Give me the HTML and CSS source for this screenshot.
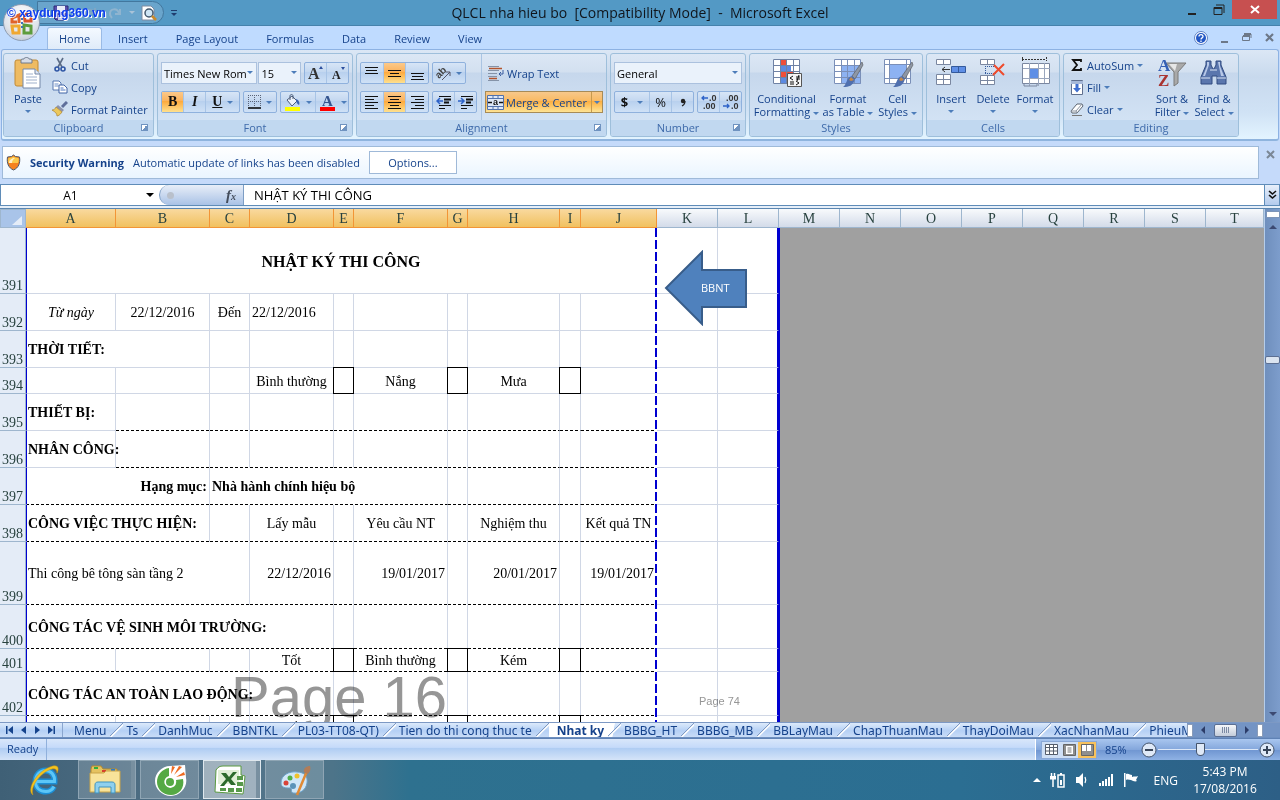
FILE: index.html
```html
<!DOCTYPE html>
<html lang="en">
<head>
  <meta charset="UTF-8">
  <meta name="viewport" content="width=device-width, initial-scale=1.0">
  <title>QLCL nha hieu bo [Compatibility Mode] - Microsoft Excel</title>
  <link rel="stylesheet" href="styles.css">
</head>
<body>
  <!-- Title bar -->
  <header class="titlebar">
    <div class="qat">
      <svg class="qat-save" width="16" height="16" viewBox="0 0 16 16"><path d="M1 1h14v14H3l-2-2z" fill="#5a4fae" stroke="#2d2877"/><path d="M4 1h8v6H4z" fill="#e8ecfa"/><path d="M5 10h7v5H5z" fill="#c9cde6"/></svg>
      <svg width="42" height="16" viewBox="0 0 42 16"><path d="M4 9a5 5 0 0 1 9-2M14 3v5H9" fill="none" stroke="#7fa6c4" stroke-width="2"/><path d="M39 4v5h-5M38 8c-2-5-9-5-9 1 0 2 1 3 2 4" fill="none" stroke="#8fb4cf" stroke-width="2"/></svg>
      <span class="caret pale"></span>
      <svg class="preview" width="16" height="16" viewBox="0 0 16 16"><path d="M1 1h9l3 3v11H1z" fill="#fff" stroke="#7c8aa0"/><circle cx="8" cy="8" r="4" fill="#cfe6f5" stroke="#44596e" stroke-width="1.5"/><path d="M11 11l4 4" stroke="#c98a2b" stroke-width="2.5"/></svg>
    </div>
    <span class="qat-more"><i></i><span class="caret navy"></span></span>
    <h1>QLCL nha hieu bo&nbsp; [Compatibility Mode]&nbsp; -&nbsp; Microsoft Excel</h1>
    <div class="win-buttons">
      <button type="button" aria-label="Minimize"><svg width="10" height="12" viewBox="0 0 10 12"><path d="M1 10h8" stroke="#222" stroke-width="2"/></svg></button>
      <button type="button" aria-label="Restore"><svg width="12" height="12" viewBox="0 0 12 12"><path d="M1 3.500h8v7H1zM3 1h8v8" fill="none" stroke="#222"/><path d="M1 4h8" stroke="#222" stroke-width="2"/></svg></button>
      <button type="button" class="close" aria-label="Close"><svg width="10" height="9" viewBox="0 0 10 9"><path d="M1 1l8 7M9 1L1 8" stroke="#fff" stroke-width="2"/></svg></button>
    </div>
    <button type="button" class="office" aria-label="Office Button">
      <svg width="24" height="26" viewBox="0 0 24 26" fill="none" stroke-width="3"><path d="M2 8l7-3v8M2 8v4h5" stroke="#e0622a"/><path d="M14 4h7v7h-6z" stroke="#d9532c"/><path d="M2 16h7v7H3z" stroke="#f0a830"/><path d="M14 15v8h7v-7z" stroke="#5d9c3c"/><path d="M12 8v12" stroke="#3b74bb" stroke-width="2" stroke-dasharray="2 2"/></svg>
    </button>
    <span class="site-mark">© <b>xaydung360.vn</b></span>
  </header>

  <!-- Ribbon tabs -->
  <nav class="ribbon-tabs">
    <a href="#" class="active">Home</a>
    <a href="#">Insert</a>
    <a href="#">Page Layout</a>
    <a href="#">Formulas</a>
    <a href="#">Data</a>
    <a href="#">Review</a>
    <a href="#">View</a>
    <div class="doc-buttons">
      <button type="button" aria-label="Help"><svg width="14" height="14" viewBox="0 0 14 14"><circle cx="7" cy="7" r="6.500" fill="#fff" stroke="#5f83c4"/><circle cx="7" cy="7" r="5" fill="#2257c5"/><path d="M5 5.500c0-2.500 4-2.500 4 0C9 7 7 6.800 7 8.500M7 9.500V11" fill="none" stroke="#fff" stroke-width="1.300"/></svg></button>
      <button type="button" aria-label="Minimize workbook"><svg width="8" height="10" viewBox="0 0 8 10"><path d="M0 9h7" stroke="#6d7888" stroke-width="2"/></svg></button>
      <button type="button" aria-label="Restore workbook"><svg width="10" height="9" viewBox="0 0 10 9"><path d="M.5 3.500h7v4h-7zM2 1h7v4" fill="none" stroke="#6d7888"/><path d="M1 3h7M2 1h7" stroke="#6d7888" stroke-width="2"/></svg></button>
      <button type="button" aria-label="Close workbook"><svg width="10" height="9" viewBox="0 0 10 9"><path d="M1 1l7 7M8 1L1 8" stroke="#6d7888" stroke-width="2.200"/></svg></button>
    </div>
  </nav>

  <!-- Ribbon -->
  <section class="ribbon">
    <div class="group clipboard">
      <div class="group-body">
        <button type="button" class="big">
          <svg width="30" height="32" viewBox="0 0 30 32"><rect x="2" y="3" width="23" height="26" rx="2" fill="#eebb62" stroke="#c08a36"/><path d="M8 3c0-1 2-1 3-1 0-2 5-2 5 0 1 0 3 0 3 1v3H8z" fill="#d6dce6" stroke="#6f7b8c"/><path d="M10 12h12l5 5v14H10z" fill="#fff" stroke="#7588a8"/><path d="M22 12v5h5" fill="#dfe7f3" stroke="#7588a8"/><path d="M13 17h7M13 20h11M13 23h11M13 26h11" stroke="#9fb0cb"/></svg>
          <span>Paste</span><span class="caret"></span>
        </button>
        <div class="stack">
          <button type="button" class="small"><svg width="16" height="16" viewBox="0 0 16 16"><path d="M5 1l5 9M11 1L6 10" stroke="#5c6c86" stroke-width="1.600"/><circle cx="5" cy="12" r="2" fill="none" stroke="#2f56a5" stroke-width="1.600"/><circle cx="11" cy="12" r="2" fill="none" stroke="#2f56a5" stroke-width="1.600"/></svg>Cut</button>
          <button type="button" class="small"><svg width="16" height="16" viewBox="0 0 16 16"><path d="M1 2h6l2 2v7H1z" fill="#fff" stroke="#5777b0"/><path d="M2.500 5h4M2.500 7h4" stroke="#6e8fc8"/><path d="M7 6h5l3 3v5H7z" fill="#fff" stroke="#3f62a5"/><path d="M8.500 9h3M8.500 11h5" stroke="#4d76c0"/></svg>Copy</button>
          <button type="button" class="small"><svg width="16" height="16" viewBox="0 0 16 16"><path d="M15 1l-5 5" stroke="#5f6f9b" stroke-width="3"/><path d="M6 4l6 5-2 2-6-5z" fill="#8c93ad"/><path d="M4 6l6 5c-2 3-4 4-5 4C5 12 3 11 0 9c2 0 3-1 4-3z" fill="#ecc85c" stroke="#a98232" stroke-width=".7"/></svg>Format Painter</button>
        </div>
      </div>
      <div class="group-label">Clipboard<i class="launcher"></i></div>
    </div>

    <div class="group font">
      <div class="group-body rows">
        <div class="row">
          <label class="combo font-name"><select aria-label="Font"><option>Times New Rom</option></select></label>
          <label class="combo font-size"><select aria-label="Font size"><option>15</option></select></label>
          <div class="btns grow-shrink">
            <button type="button" aria-label="Grow font"><svg width="18" height="18" viewBox="0 0 18 18"><text x="1" y="15" font-family="Liberation Serif" font-weight="bold" font-size="16" fill="#333">A</text><path d="M12 5l2-3 2 3z" fill="#2c4f9e"/></svg></button>
            <button type="button" aria-label="Shrink font"><svg width="18" height="18" viewBox="0 0 18 18"><text x="3" y="15" font-family="Liberation Serif" font-weight="bold" font-size="12" fill="#222">A</text><path d="M12 3l2 3 2-3z" fill="#2c4f9e"/></svg></button>
          </div>
        </div>
        <div class="row">
          <div class="btns biu">
            <button type="button" class="on serif"><b>B</b></button>
            <button type="button" class="serif"><b><i>I</i></b></button>
            <button type="button" class="serif wide"><b><u>U</u></b><span class="caret"></span></button>
          </div>
          <div class="btns single">
            <button type="button" class="wide" aria-label="Borders"><svg width="14" height="14" viewBox="0 0 14 14"><path d="M.5 0v12M6.500 0v12M12.500 0v12M0 .5h13M0 6.500h13" stroke="#5a6478" stroke-dasharray="1 1"/><path d="M0 13h13" stroke="#000" stroke-width="1.500"/></svg><span class="caret"></span></button>
          </div>
          <div class="btns colors">
            <button type="button" class="wide" aria-label="Fill color"><svg width="17" height="17" viewBox="0 0 17 17"><path d="M3 6l5-4 5 5-5 5z" fill="#eef3fa" stroke="#4c5d7a"/><path d="M6 6V2c0-2 3-2 3 0v3" fill="none" stroke="#4c5d7a"/><path d="M12 5c3 1 4 4 3 6-2-1-3-3-3-6z" fill="#3a62b0"/><path d="M1 13h15v4H1z" fill="#ff0"/></svg><span class="caret"></span></button>
            <button type="button" class="wide" aria-label="Font color"><svg width="17" height="17" viewBox="0 0 17 17"><text x="3" y="12" font-family="Liberation Serif" font-weight="bold" font-size="15" fill="#35558f">A</text><path d="M1 13h15v4H1z" fill="#f00"/></svg><span class="caret"></span></button>
          </div>
        </div>
      </div>
      <div class="group-label">Font<i class="launcher"></i></div>
    </div>

    <div class="group alignment">
      <div class="group-body">
        <div class="rows left-part">
          <div class="row">
            <div class="btns three">
              <button type="button" aria-label="Top align"><svg width="15" height="14" viewBox="0 0 15 14"><path d="M1 1.500h13M2 4.500h11M1 7.500h13" stroke="#111"/></svg></button>
              <button type="button" class="on" aria-label="Middle align"><svg width="15" height="14" viewBox="0 0 15 14"><path d="M1 4.500h13M3 7.500h9M1 10.500h13" stroke="#111"/></svg></button>
              <button type="button" aria-label="Bottom align"><svg width="15" height="14" viewBox="0 0 15 14"><path d="M1 7.500h13M2 10.500h11M1 13.500h13" stroke="#111"/></svg></button>
            </div>
            <div class="btns single">
              <button type="button" class="wide" aria-label="Orientation"><svg width="16" height="16" viewBox="0 0 16 16"><text x="0" y="11" transform="rotate(-45 5 9)" font-family="Liberation Sans" font-weight="bold" font-size="10" fill="#444">ab</text><path d="M6 15l8-8M14 11V7h-4" fill="none" stroke="#556"/></svg><span class="caret"></span></button>
            </div>
          </div>
          <div class="row">
            <div class="btns three">
              <button type="button" aria-label="Align left"><svg width="15" height="14" viewBox="0 0 15 14"><path d="M1 1.500h13M1 4.500h9M1 7.500h13M1 10.500h9M1 13.500h13" stroke="#111"/></svg></button>
              <button type="button" class="on" aria-label="Center"><svg width="15" height="14" viewBox="0 0 15 14"><path d="M1 1.500h13M3 4.500h9M1 7.500h13M3 10.500h9M1 13.500h13" stroke="#111"/></svg></button>
              <button type="button" aria-label="Align right"><svg width="15" height="14" viewBox="0 0 15 14"><path d="M1 1.500h13M5 4.500h9M1 7.500h13M5 10.500h9M1 13.500h13" stroke="#111"/></svg></button>
            </div>
            <div class="btns two">
              <button type="button" aria-label="Decrease indent"><svg width="16" height="14" viewBox="0 0 16 14"><path d="M3 1.500h12M3 10.500h12M3 13.500h6" stroke="#111"/><path d="M8 4.500h7M8 7.500h5" stroke="#111" stroke-width="2"/><path d="M7 6H2M4 3L1 6l3 3" fill="none" stroke="#2d62c8" stroke-width="1.500"/></svg></button>
              <button type="button" aria-label="Increase indent"><svg width="16" height="14" viewBox="0 0 16 14"><path d="M3 1.500h12M3 10.500h12M3 13.500h6" stroke="#111"/><path d="M8 4.500h7M8 7.500h5" stroke="#111" stroke-width="2"/><path d="M0 6h5M3 3l3 3-3 3" fill="none" stroke="#2d62c8" stroke-width="1.500"/></svg></button>
            </div>
          </div>
        </div>
        <div class="rows right-part">
          <button type="button" class="small wrap"><svg width="16" height="15" viewBox="0 0 16 15"><path d="M0 .5h11M0 4.500h11M0 7.500h9M0 10.500h9M0 14.500h11" stroke="#8593a8"/><path d="M1 2.500h13" stroke="#b3542d" stroke-width="1.500"/><path d="M1 12.500h8" stroke="#b3542d" stroke-width="1.500"/><path d="M15 4v4h-4M13 6l-2 2 2 2" fill="none" stroke="#3a5da0"/></svg>Wrap Text</button>
          <button type="button" class="small merge"><svg width="17" height="15" viewBox="0 0 17 15"><path d="M.5.5h16v14H.5z" fill="#dfe8f6" stroke="#5272ac"/><path d="M6 0v3M11 0v3M6 12v3M11 12v3M0 3.500h16M0 11.500h16" stroke="#5272ac"/><text x="6" y="10" font-family="Liberation Sans" font-weight="bold" font-size="9" fill="#111">a</text><path d="M1 7.500h4M12 7.500h4" stroke="#111" stroke-width="1.500"/></svg>Merge &amp; Center<span class="split"><span class="caret"></span></span></button>
        </div>
      </div>
      <div class="group-label">Alignment<i class="launcher"></i></div>
    </div>

    <div class="group number">
      <div class="group-body rows">
        <div class="row">
          <label class="combo number-format"><select aria-label="Number format"><option>General</option></select></label>
        </div>
        <div class="row">
          <div class="btns biu">
            <button type="button" class="wide money"><b>$</b><span class="caret"></span></button>
            <button type="button" class="percent">%</button>
            <button type="button" aria-label="Comma style"><svg width="6" height="9" viewBox="0 0 6 9"><circle cx="3" cy="3" r="2.200" fill="#222"/><path d="M5 3c0 3-1 4-3 5" fill="none" stroke="#222" stroke-width="1.300"/></svg></button>
          </div>
          <div class="btns two">
            <button type="button" aria-label="Increase decimal"><svg width="18" height="16" viewBox="0 0 18 16"><text x="9" y="7" font-family="Liberation Sans" font-weight="bold" font-size="9" fill="#333">.0</text><text x="3" y="15" font-family="Liberation Sans" font-weight="bold" font-size="9" fill="#333">.00</text><path d="M8 4H2M4 2L2 4l2 2" fill="none" stroke="#2d62c8" stroke-width="1.300"/></svg></button>
            <button type="button" aria-label="Decrease decimal"><svg width="18" height="16" viewBox="0 0 18 16"><text x="4" y="7" font-family="Liberation Sans" font-weight="bold" font-size="9" fill="#333">.00</text><text x="9" y="15" font-family="Liberation Sans" font-weight="bold" font-size="9" fill="#333">.0</text><path d="M1 12h6M5 10l2 2-2 2" fill="none" stroke="#2d62c8" stroke-width="1.300"/></svg></button>
          </div>
        </div>
      </div>
      <div class="group-label">Number<i class="launcher"></i></div>
    </div>

    <div class="group styles">
      <div class="group-body">
        <button type="button" class="big w66">
          <svg width="32" height="32" viewBox="0 0 32 32"><path d="M2 2h27v25H2z" fill="#fff"/><path d="M9 2h7v6H9zM9 14h13v7H9z" fill="#ee4f3a"/><path d="M9 8h11v6H9zM9 21h6v6H9z" fill="#5b8ae2"/><path d="M2.500 2.500h26v24h-26zM2 8.500h27M2 14.500h27M2 20.500h27M9.500 2v25M15.500 2v25M22.500 2v25" fill="none" stroke="#6f82a5"/><path d="M16.500 16.500h14v13h-14z" fill="#f5f5f5" stroke="#555"/><path d="M22 19l-3 2 3 2M19 25h4M19 27h4M25 20h4M25 22h4M28 18l-2 6M25 24l3 2-3 2" fill="none" stroke="#111"/></svg>
          <span>Conditional</span><span>Formatting <i class="caret"></i></span>
        </button>
        <button type="button" class="big w52">
          <svg width="32" height="32" viewBox="0 0 32 32"><path d="M2 2h27v25H2z" fill="#fff"/><path d="M9 8h20v19H9z" fill="#8db2f2"/><path d="M2.500 2.500h26v24h-26zM2 8.500h27M2 14.500h27M2 20.500h27M9.500 2v25M15.500 2v25M22.500 2v25" fill="none" stroke="#7a8fb8"/><path d="M30 5L20 19l3 3 8-14z" fill="#8e97a5" stroke="#555" stroke-width=".6"/><path d="M20 19l3 3c-2 7-6 8-12 8 4-2 3-10 9-11z" fill="#4f6fae"/><path d="M19 20l3 3-3 1-2-1z" fill="#c38a4a"/></svg>
          <span>Format</span><span>as Table <i class="caret"></i></span>
        </button>
        <button type="button" class="big w46">
          <svg width="32" height="32" viewBox="0 0 32 32"><path d="M2 2h27v25H2z" fill="#fff"/><path d="M7 7h17v15H7z" fill="#8db2f2"/><path d="M2.500 2.500h26v24h-26zM2 7.500h27M2 21.500h27M7.500 2v25M24.500 2v25" fill="none" stroke="#7a8fb8"/><path d="M30 5L20 19l3 3 8-14z" fill="#8e97a5" stroke="#555" stroke-width=".6"/><path d="M20 19l3 3c-2 7-6 8-12 8 4-2 3-10 9-11z" fill="#4f6fae"/><path d="M19 20l3 3-3 1-2-1z" fill="#c38a4a"/></svg>
          <span>Cell</span><span>Styles <i class="caret"></i></span>
        </button>
      </div>
      <div class="group-label">Styles</div>
    </div>

    <div class="group cells">
      <div class="group-body">
        <button type="button" class="big w42">
          <svg width="32" height="32" viewBox="0 0 32 32"><path d="M1.500 2.500h14v5h-14zM8.500 2v5M1.500 17.500h14v10h-14zM8.500 17v10M1 22.500h14" fill="#fff" stroke="#7a87a0"/><path d="M16.500 9.500h14v6h-14z" fill="#5f8fe6" stroke="#345a9c"/><path d="M23.500 9v6" stroke="#345a9c"/><path d="M15 12.500H7M10 10l-3 2.500 3 2.500" fill="none" stroke="#333"/></svg>
          <span>Insert</span><span class="caret"></span>
        </button>
        <button type="button" class="big w42">
          <svg width="32" height="32" viewBox="0 0 32 32"><path d="M3.500 2.500h14v5h-14zM10.500 2v5M3.500 18.500h14v9h-14zM10.500 18v10M3 23.500h14" fill="#fff" stroke="#7a87a0"/><path d="M8 9.500h11M8 16.500h11M8.500 9v8" stroke="#345a9c" stroke-dasharray="1 1"/><path d="M17 8l10 10M27 7L16 18" stroke="#ee4b2c" stroke-width="2"/></svg>
          <span>Delete</span><span class="caret"></span>
        </button>
        <button type="button" class="big w42">
          <svg width="32" height="32" viewBox="0 0 32 32"><path d="M3 2.500h24M3.500 0v4M27.500 0v4" stroke="#333" stroke-dasharray="2 1"/><path d="M3.500 6.500h27v20h-27z" fill="#fff" stroke="#7a87a0"/><path d="M11 12h8v9h-8z" fill="#5f8fe6"/><path d="M4 11.500h27M4 21.500h27M10.500 6v23M19.500 6v23M25.500 6v20" stroke="#9aa6bd"/><path d="M5 27v2h13v-2" fill="none" stroke="#7a87a0"/></svg>
          <span>Format</span><span class="caret"></span>
        </button>
      </div>
      <div class="group-label">Cells</div>
    </div>

    <div class="group editing">
      <div class="group-body">
        <div class="stack">
          <button type="button" class="small"><svg width="14" height="14" viewBox="0 0 14 14"><path d="M11 4V2H3l4 5-4 5h8v-2" fill="none" stroke="#111" stroke-width="1.800"/></svg>AutoSum <span class="caret"></span></button>
          <button type="button" class="small"><svg width="14" height="15" viewBox="0 0 14 15"><path d="M1.500.5h11v14h-11z" fill="#fff" stroke="#5f6f8e"/><path d="M1 1h12v3H1z" fill="#a6b8d8"/><path d="M5.500 4h3v4h2.500l-4 4.500L3 8h2.500z" fill="#3f6fd0"/></svg>Fill <span class="caret"></span></button>
          <button type="button" class="small"><svg width="14" height="14" viewBox="0 0 14 14"><path d="M7 2h5l1 2-6 7H2l-1-2z" fill="#fff" stroke="#5d6672"/><path d="M1 9h5l6-7M6 9l1 2" fill="none" stroke="#8a93a0"/><path d="M2 13.500h10" stroke="#777"/></svg>Clear <span class="caret"></span></button>
        </div>
        <button type="button" class="big w42">
          <svg width="32" height="32" viewBox="0 0 32 32"><path d="M10 6h20l-8 9v11l-4 3V15z" fill="#a9a9a9" stroke="#7a7a7a"/><path d="M13 7h8l-2 7z" fill="#e6e6e6"/><text x="2" y="14" font-family="Liberation Serif" font-weight="bold" font-size="17" fill="#3560b5">A</text><text x="2" y="29" font-family="Liberation Serif" font-weight="bold" font-size="17" fill="#a93330">Z</text></svg>
          <span>Sort &amp;</span><span>Filter <i class="caret"></i></span>
        </button>
        <button type="button" class="big w42">
          <svg width="32" height="32" viewBox="0 0 32 32"><path d="M8 4h5v4l2 4h1l2-4V4h5v4l5 12v7h-9v-8h-5v8H3v-7L8 8z" fill="#5a76ad" stroke="#304a80"/><path d="M9 5h2v3l-4 11H5L9 9zM20 5h2v4l4 10h-3z" fill="#b8c9e8"/><path d="M3 21h9M19 21h9M12 13h7" stroke="#dbe5f5"/></svg>
          <span>Find &amp;</span><span>Select <i class="caret"></i></span>
        </button>
      </div>
      <div class="group-label">Editing</div>
    </div>
  </section>

  <!-- Security message bar -->
  <section class="message-bar">
    <div class="message">
      <svg width="15" height="17" viewBox="0 0 15 17"><path d="M7.500 1l2 1.500 4 .5c1 6-1 11-6 13-5-2-7-7-6-13l4-.5z" fill="#f58220" stroke="#4f5a6b"/><path d="M7.500 2.500l2 1 3 .5c.5 2 0 4-.5 5H2.500C2 7 2 5 2.500 4l3-.5z" fill="#fbc94a"/><path d="M3 9c0-3 3-5 6-5-2 1-3 3-3 5z" fill="#fff" opacity=".7"/></svg>
      <strong>Security Warning</strong>
      <span>Automatic update of links has been disabled</span>
      <button type="button">Options...</button>
    </div>
    <button type="button" class="dismiss" aria-label="Close message"><svg width="9" height="9" viewBox="0 0 9 9"><path d="M1 1l7 7M8 1L1 8" stroke="#7b8796" stroke-width="2"/></svg></button>
  </section>

  <!-- Formula bar -->
  <section class="formula-bar">
    <label class="name-box"><input type="text" value="A1" aria-label="Name box"><span class="caret black"></span></label>
    <div class="fx"><i></i><em>f<small>x</small></em></div>
    <input type="text" class="formula" value="NHẬT KÝ THI CÔNG" aria-label="Formula">
    <button type="button" aria-label="Expand formula bar"><svg width="9" height="10" viewBox="0 0 9 10"><path d="M1 1l3.500 3L8 1M1 5l3.500 3L8 5" fill="none" stroke="#111" stroke-width="1.600"/></svg></button>
  </section>

  <!-- Worksheet -->
  <main class="workspace">
    <div class="sheet">
      <table>
        <colgroup>
          <col class="c-head"><col class="c-a"><col class="c-b"><col class="c-c"><col class="c-d"><col class="c-e"><col class="c-f"><col class="c-e"><col class="c-h"><col class="c-i"><col class="c-j">
          <col class="c-k"><col class="c-k"><col class="c-k"><col class="c-k"><col class="c-k"><col class="c-k"><col class="c-k"><col class="c-k"><col class="c-k"><col>
        </colgroup>
        <thead>
          <tr>
            <th class="corner"><svg width="10" height="9" viewBox="0 0 10 9"><path d="M10 0v9H0z" fill="#e4ecf7"/></svg></th>
            <th class="sel">A</th><th class="sel">B</th><th class="sel">C</th><th class="sel">D</th><th class="sel">E</th><th class="sel">F</th><th class="sel">G</th><th class="sel">H</th><th class="sel">I</th><th class="sel">J</th>
            <th>K</th><th>L</th><th>M</th><th>N</th><th>O</th><th>P</th><th>Q</th><th>R</th><th>S</th><th>T</th>
          </tr>
        </thead>
        <tbody>
          <tr class="h66">
            <th>391</th>
            <td colspan="10" class="first title">NHẬT KÝ THI CÔNG</td>
            <td></td><td class="last"></td>
            <td class="outside" colspan="8" rowspan="13"></td>
          </tr>
          <tr class="h37">
            <th>392</th>
            <td class="first center"><em>Từ ngày</em></td><td class="center">22/12/2016</td><td class="center">Đến</td><td>22/12/2016</td><td></td><td></td><td></td><td></td><td></td><td></td>
            <td></td><td class="last"></td>
          </tr>
          <tr class="h37">
            <th>393</th>
            <td colspan="2" class="first bold">THỜI TIẾT:</td><td></td><td></td><td></td><td></td><td></td><td></td><td></td><td></td>
            <td></td><td class="last"></td>
          </tr>
          <tr class="h26">
            <th>394</th>
            <td class="first"></td><td></td><td></td><td class="center">Bình thường</td><td class="box"></td><td class="center">Nắng</td><td class="box"></td><td class="center">Mưa</td><td class="box"></td><td></td>
            <td></td><td class="last"></td>
          </tr>
          <tr class="h37">
            <th>395</th>
            <td class="first bold">THIẾT BỊ:</td><td class="dot"></td><td class="dot"></td><td class="dot"></td><td class="dot"></td><td class="dot"></td><td class="dot"></td><td class="dot"></td><td class="dot"></td><td class="dot"></td>
            <td></td><td class="last"></td>
          </tr>
          <tr class="h37">
            <th>396</th>
            <td class="first bold">NHÂN CÔNG:</td><td class="dot"></td><td class="dot"></td><td class="dot"></td><td class="dot"></td><td class="dot"></td><td class="dot"></td><td class="dot"></td><td class="dot"></td><td class="dot"></td>
            <td></td><td class="last"></td>
          </tr>
          <tr class="h37">
            <th>397</th>
            <td colspan="2" class="first bold right dot">Hạng mục:</td><td colspan="4" class="bold dot">Nhà hành chính hiệu bộ</td><td class="dot"></td><td class="dot"></td><td class="dot"></td><td class="dot"></td>
            <td></td><td class="last"></td>
          </tr>
          <tr class="h37">
            <th>398</th>
            <td colspan="2" class="first bold dot">CÔNG VIỆC THỰC HIỆN:</td><td class="dot"></td><td class="center dot">Lấy mẫu</td><td class="dot"></td><td class="center dot">Yêu cầu NT</td><td class="dot"></td><td class="center dot">Nghiệm thu</td><td class="dot"></td><td class="center dot">Kết quả TN</td>
            <td></td><td class="last"></td>
          </tr>
          <tr class="h63">
            <th>399</th>
            <td colspan="3" class="first dot">Thi công bê tông sàn tầng 2</td><td class="right dot">22/12/2016</td><td class="dot"></td><td class="right dot">19/01/2017</td><td class="dot"></td><td class="right dot">20/01/2017</td><td class="dot"></td><td class="right dot">19/01/2017</td>
            <td></td><td class="last"></td>
          </tr>
          <tr class="h44">
            <th>400</th>
            <td colspan="4" class="first bold dot">CÔNG TÁC VỆ SINH MÔI TRƯỜNG:</td><td class="dot"></td><td class="dot"></td><td class="dot"></td><td class="dot"></td><td class="dot"></td><td class="dot"></td>
            <td></td><td class="last"></td>
          </tr>
          <tr class="h23">
            <th>401</th>
            <td class="first dot"></td><td class="dot"></td><td class="dot"></td><td class="center dot">Tốt</td><td class="box"></td><td class="center dot">Bình thường</td><td class="box"></td><td class="center dot">Kém</td><td class="box"></td><td class="dot"></td>
            <td></td><td class="last"></td>
          </tr>
          <tr class="h44">
            <th>402</th>
            <td colspan="3" class="first bold dot">CÔNG TÁC AN TOÀN LAO ĐỘNG:</td><td class="dot"></td><td class="dot"></td><td class="dot"></td><td class="dot"></td><td class="dot"></td><td class="dot"></td><td class="dot"></td>
            <td></td><td class="last"></td>
          </tr>
          <tr class="h23">
            <th></th>
            <td class="first"></td><td></td><td></td><td class="center">Tốt</td><td class="box"></td><td></td><td class="box"></td><td></td><td class="box"></td><td></td>
            <td></td><td class="last"></td>
          </tr>
        </tbody>
      </table>
      <div class="page-mark">Page 16</div>
      <div class="page-mark next">Page 74</div>
      <div class="page-break"></div>
      <a href="#" class="arrow-shape">
        <svg width="84" height="76" viewBox="0 0 84 76"><path d="M2 38L38 2v18h44v37H38v17z" fill="#4f81bd" stroke="#385d8a" stroke-width="2"/></svg>
        <span>BBNT</span>
      </a>
    </div>
    <div class="vscroll">
      <i class="splitter"></i>
      <span class="tri up"></span>
      <i class="thumb"></i>
      <span class="tri down"></span>
    </div>
  </main>

  <!-- Sheet tabs -->
  <nav class="sheet-tabs">
    <div class="tab-nav">
      <svg width="9" height="8" viewBox="0 0 9 8"><path d="M1 0h1.500v8H1zM8 0v8L3 4z" fill="#15428b"/></svg>
      <svg width="6" height="8" viewBox="0 0 6 8"><path d="M5 0v8L0 4z" fill="#15428b"/></svg>
      <svg width="6" height="8" viewBox="0 0 6 8"><path d="M1 0v8l5-4z" fill="#15428b"/></svg>
      <svg width="9" height="8" viewBox="0 0 9 8"><path d="M6.500 0H8v8H6.500zM1 0v8l5-4z" fill="#15428b"/></svg>
    </div>
    <div class="tabs">
      <a href="#">Menu</a><a href="#">Ts</a><a href="#">DanhMuc</a><a href="#">BBNTKL</a><a href="#">PL03-TT08-QT)</a><a href="#">Tien do thi cong thuc te</a><a href="#" class="active">Nhat ky</a><a href="#">BBBG_HT</a><a href="#">BBBG_MB</a><a href="#">BBLayMau</a><a href="#">ChapThuanMau</a><a href="#">ThayDoiMau</a><a href="#">XacNhanMau</a><a href="#">PhieuMau</a>
    </div>
    <div class="hscroll">
      <i class="grip"></i><span class="tri left"></span><i class="thumb"></i><span class="tri rightward"></span><i class="grip"></i>
    </div>
  </nav>

  <!-- Status bar -->
  <footer class="status">
    <span class="ready">Ready</span>
    <div class="status-right">
      <div class="views">
        <button type="button" aria-label="Normal view"><svg width="13" height="11" viewBox="0 0 13 11"><path d="M.5.5h12v10H.5zM0 3.500h13M0 7h13M4.500 0v11M8.500 0v11" fill="#fff" stroke="#555d6b"/></svg></button>
        <button type="button" aria-label="Page layout view"><svg width="13" height="12" viewBox="0 0 13 12"><path d="M.5.5h12v11H.5z" fill="#8e8e8e" stroke="#666"/><path d="M3 2h7v8H3z" fill="#fff"/><path d="M4.500 4h4M4.500 6h4M4.500 8h4" stroke="#777"/></svg></button>
        <button type="button" class="on" aria-label="Page break preview"><svg width="13" height="12" viewBox="0 0 13 12"><path d="M.5.5h12v11H.5z" fill="#8e8e8e" stroke="#666"/><path d="M1 1h4v6H1zM6 1h4v6H6z" fill="#fff"/></svg></button>
      </div>
      <span class="zoom-value">85%</span>
      <button type="button" class="round" aria-label="Zoom out"><svg width="16" height="16" viewBox="0 0 16 16"><circle cx="8" cy="8" r="7" fill="#dfe9f7" stroke="#44546c"/><path d="M4 8h8" stroke="#39465a" stroke-width="2"/></svg></button>
      <input type="range" min="0" max="100" value="42" aria-label="Zoom">
      <button type="button" class="round" aria-label="Zoom in"><svg width="16" height="16" viewBox="0 0 16 16"><circle cx="8" cy="8" r="7" fill="#dfe9f7" stroke="#44546c"/><path d="M4 8h8M8 4v8" stroke="#39465a" stroke-width="2"/></svg></button>
    </div>
  </footer>

  <!-- Windows taskbar -->
  <footer class="taskbar">
    <div class="apps">
      <button type="button" class="app plain" aria-label="Internet Explorer"><svg width="34" height="34" viewBox="0 0 34 34"><path d="M8 18.500h18.500C27 12 23 7.500 17.500 7.500S7.500 12 7.500 18.500 12 28.500 18 28.500c4 0 6.500-2 8-5" fill="none" stroke="#1c8fd6" stroke-width="6"/><path d="M8 18.500h18.500C27 12 23 7.500 17.500 7.500S7.500 12 7.500 18.500 12 28.500 18 28.500c4 0 6.500-2 8-5" fill="none" stroke="#5cc6f7" stroke-width="3"/><path d="M5 32C-2 27 8 9 22 4c7-3 10 0 7 6 0-5-3-5-8-3C10 12 2 25 5 32z" fill="#f6c31c" stroke="#c99410" stroke-width=".5"/></svg></button>
      <button type="button" class="app stacked" aria-label="File Explorer"><svg width="34" height="32" viewBox="0 0 34 32"><path d="M3 5l1-3h9l2 3h14v21H3z" fill="#e5c260" stroke="#b38a2e"/><path d="M6 3h4v2H6z" fill="#2fae3c"/><path d="M14 6h4v2h-4z" fill="#d8422e"/><path d="M23 5h4v2h-4z" fill="#2f7ac8"/><path d="M2 9h14l2-2h14v21H2z" fill="#f8e39a" stroke="#c9a448"/><path d="M7 29v-8c0-2 1-3 3-3h14c2 0 3 1 3 3v8h-4v-6H11v6z" fill="#8fd0ee" stroke="#3f93bf"/></svg></button>
      <button type="button" class="app" aria-label="Coc Coc"><svg width="34" height="34" viewBox="0 0 34 34"><path d="M17 3l15-1 1 13c2 9-6 18-15 18C9 33 2 26 2 18 2 10 9 3 17 3z" fill="#fff"/><path d="M16 5v8a6 6 0 1 0 7 4l7-1c2 9-4 16-12 16C10 32 4 26 4 19S9 6 16 5z" fill="#55a944"/><path d="M18 11l1-8 3 1zM21 12l5-9 3 1zM23 14l8-5 1 3z" fill="#ef6a20"/><circle cx="17" cy="19" r="4" fill="#55a944"/></svg></button>
      <button type="button" class="app stacked active" aria-label="Excel"><svg width="34" height="32" viewBox="0 0 34 32"><path d="M3 6c2-3 4-4 7-4h18v9l4 1-2 18-28-2z" fill="#fff" stroke="#5a9a41"/><path d="M5 6h21v14H5z" fill="#e1efd7"/><path d="M8 9h5l3 4 4-5h4l-6 7 5 6h-5l-3-4-4 5H7l6-7z" fill="#2c6a2c"/><path d="M24 12h6v4h-6zM24 18h6v4h-6zM23 24h6v4h-6zM15 24h6v4h-6zM7 24h6v3H7z" fill="#56984a"/></svg></button>
      <button type="button" class="app" aria-label="Paint"><svg width="34" height="34" viewBox="0 0 34 34"><path d="M3 20C3 12 11 8 19 9c8 0 11 5 10 11-1 7-7 11-14 10-3-1 0-4-3-5-4 0-9 0-9-5z" fill="#cfe6f7" stroke="#6aa0c8"/><circle cx="8" cy="20" r="2.500" fill="#d94339"/><circle cx="12" cy="15" r="2.500" fill="#4fae4a"/><circle cx="19" cy="13" r="2.500" fill="#efc12c"/><circle cx="15" cy="23" r="3" fill="#5b93b8"/><path d="M19 32L29 8" stroke="#e08a35" stroke-width="2.500"/><path d="M26 9c-1-4 3-6 6-6 1 3 0 7-3 8z" fill="#b17c58"/></svg></button>
    </div>
    <div class="tray">
      <svg width="10" height="8" viewBox="0 0 10 8"><path d="M1 6l4-4 4 4z" fill="#fff"/></svg>
      <svg width="16" height="16" viewBox="0 0 16 16"><path d="M0 4h6v3.500H0z" fill="#fff"/><path d="M1.500 1v3M4.500 1v3M3 7v8" stroke="#fff" stroke-width="1.500"/><path d="M8 3h6v12H8z" fill="none" stroke="#fff" stroke-width="1.500"/><path d="M10 1h2v2h-2zM10 8h2v5h-2z" fill="#fff"/></svg>
      <svg width="16" height="16" viewBox="0 0 16 16"><path d="M2 5h3l4-4v14l-4-4H2z" fill="#fff"/><path d="M11 5c1 2 1 4 0 6" fill="none" stroke="#fff" stroke-width="1.300"/></svg>
      <svg width="17" height="14" viewBox="0 0 17 14"><path d="M1 10h2v3H1zM4 8h2v5H4zM7 6h2v7H7zM10 4h2v9h-2zM13 1h2v12h-2z" fill="#fff"/></svg>
      <svg width="16" height="16" viewBox="0 0 16 16"><path d="M1 1h1.500v14H1zM3 2c3-1 4 1 6 1v2c2-1 4 0 6-1l-2 4 1 1c-2 1-4 0-6-1-2 0-3-1-5 0z" fill="#fff"/></svg>
      <span class="lang">ENG</span>
      <div class="clock"><span>5:43 PM</span><span>17/08/2016</span></div>
    </div>
  </footer>
</body>
</html>
```

FILE: styles.css
```css
* {
  box-sizing: border-box;
}
body {
  margin: 0;
  height: 100vh;
  display: flex;
  flex-direction: column;
  overflow: hidden;
  background: #c5dafa;
  font-family: "Open Sans", "Noto Sans", sans-serif;
  font-size: 11px;
  color: #15428b;
}
button {
  padding: 0;
  border: 0;
  background: none;
  font: inherit;
  color: inherit;
}
a {
  color: inherit;
  text-decoration: none;
}
svg {
  display: block;
  flex: none;
}
.caret {
  display: inline-block;
  flex: none;
  border: 3px solid transparent;
  border-top-color: #4d7dba;
  border-bottom: 0;
  vertical-align: middle;
}
.caret.pale {
  border-top-color: #a9c3d8;
}
.caret.navy {
  border-top-color: #1f3c6e;
}
.caret.black {
  border-width: 4px;
  border-bottom: 0;
  border-top-color: #000;
}

/* Title bar */
.titlebar {
  position: relative;
  flex: none;
  display: flex;
  align-items: center;
  height: 26px;
  background: #5399c5;
  border-bottom: 1px solid #4682ac;
  color: #10151c;
}
.qat {
  display: flex;
  align-items: center;
  gap: 12px;
  width: 127px;
  height: 23px;
  margin-left: 37px;
  padding-left: 15px;
  border: 1px solid #42779e;
  border-radius: 0 12px 12px 0;
  background: #6aa5cc;
}
.qat .caret,
.qat .preview {
  margin-left: -6px;
}
.qat-more {
  display: flex;
  flex-direction: column;
  align-items: center;
  gap: 2px;
  width: 20px;
}
.qat-more i {
  width: 6px;
  height: 1px;
  background: #1f3c6e;
}
.titlebar h1 {
  flex: 1;
  margin: 0;
  padding-right: 82px;
  text-align: center;
  font-size: 14px;
  font-weight: normal;
  line-height: 26px;
  white-space: nowrap;
}
.win-buttons {
  align-self: flex-start;
  display: flex;
  margin-right: 3px;
}
.win-buttons button {
  display: flex;
  align-items: center;
  justify-content: center;
  width: 27px;
  height: 19px;
}
.win-buttons .close {
  width: 45px;
  background: #c75050;
}
.office {
  position: absolute;
  z-index: 2;
  left: 3px;
  top: 4px;
  display: flex;
  align-items: center;
  justify-content: center;
  width: 37px;
  height: 37px;
  border: 1px solid #8d9cb1;
  border-radius: 50%;
  background: radial-gradient(circle at 50% 30%, #fff, #dfe3ea 60%, #b3bccb);
}
.site-mark {
  position: absolute;
  z-index: 3;
  left: 7px;
  top: 3px;
  font-family: "Liberation Sans", sans-serif;
  font-size: 12px;
  line-height: 20px;
  font-weight: bold;
  color: #0d3df0;
  text-shadow: 1px 1px #fff;
  white-space: nowrap;
}

/* Ribbon tabs */
.ribbon-tabs {
  flex: none;
  display: flex;
  align-items: flex-end;
  height: 23px;
  padding-left: 47px;
  background: #bfdbff;
}
.ribbon-tabs a {
  height: 22px;
  padding: 0 14px;
  line-height: 23px;
}
.ribbon-tabs a.active {
  padding: 0 11px;
  margin-right: 2px;
  border: 1px solid #9abbe6;
  border-bottom: 0;
  border-radius: 3px 3px 0 0;
  background: linear-gradient(#f4f9ff, #dfebf9);
  line-height: 21px;
}
.doc-buttons {
  align-self: center;
  display: flex;
  align-items: center;
  gap: 13px;
  margin-left: auto;
  padding-right: 5px;
}

/* Ribbon */
.ribbon {
  flex: none;
  display: flex;
  gap: 3px;
  height: 92px;
  margin: 0 1px;
  padding: 3px 1px 2px;
  border: 1px solid #8db2e3;
  border-bottom: 2px solid #8fb4de;
  border-radius: 3px;
  background: linear-gradient(#dbe7f5, #c8d9ed 30%, #d0e2f5 70%, #e3f4ff);
}
.group {
  flex: none;
  display: flex;
  flex-direction: column;
  border: 1px solid #9ebfdb;
  border-radius: 3px;
  background: linear-gradient(#dce7f5, #d3e0f0 18px, #c6d7ec 19px, #d6e6f7);
}
.clipboard { width: 151px; }
.font { width: 196px; }
.alignment { width: 251px; }
.number { width: 136px; }
.styles { width: 174px; }
.cells { width: 134px; }
.editing { width: 176px; }
.group-body {
  flex: 1;
  min-height: 0;
  display: flex;
  padding: 0 3px;
}
.group-label {
  position: relative;
  flex: none;
  height: 16px;
  border-radius: 0 0 2px 2px;
  background: #c1d8f0;
  color: #3e6aaa;
  line-height: 16px;
  text-align: center;
}
.launcher {
  position: absolute;
  right: 5px;
  top: 4px;
  width: 7px;
  height: 7px;
  border: 1px solid #6f93c0;
  background: linear-gradient(135deg, #fff 50%, #6f93c0 50%);
}
.big {
  display: flex;
  flex-direction: column;
  align-items: center;
  width: 42px;
  padding-top: 3px;
  line-height: 13px;
  white-space: nowrap;
}
.big svg {
  margin-bottom: 3px;
}
.big > .caret {
  margin-top: 5px;
}
.w66 { width: 67px; }
.w52 { width: 56px; }
.w46 { width: 43px; }
.w42 { width: 42px; }
.stack {
  display: flex;
  flex-direction: column;
}
.small {
  display: flex;
  align-items: center;
  gap: 3px;
  height: 22px;
  padding-left: 3px;
  white-space: nowrap;
}
.rows {
  display: flex;
  flex-direction: column;
  gap: 7px;
  padding-top: 8px;
}
.group-body.rows {
  padding: 8px 3px 0;
}
.row {
  display: flex;
  gap: 3px;
  height: 22px;
}
.combo {
  position: relative;
  display: flex;
}
.combo::after {
  content: "";
  position: absolute;
  right: 4px;
  top: 9px;
  border: 3px solid transparent;
  border-top-color: #4d7dba;
  border-bottom: 0;
}
.combo select {
  width: 100%;
  padding: 0 2px;
  appearance: none;
  border: 1px solid #abc1de;
  border-radius: 0;
  background: #eaf2fb;
  font: inherit;
  color: #000;
}
.font-name { width: 97px; }
.font-size { width: 43px; }
.number-format { width: 128px; }
.font .row:first-child {
  gap: 1px;
}
.grow-shrink {
  width: 45px;
  margin-left: 2px;
}
.btns {
  display: flex;
  border: 1px solid #8fb1dd;
  border-radius: 2px;
  background: linear-gradient(#d7e5f6, #c3d7f0 45%, #b8d0ee 46%, #cfe1f6);
}
.btns button {
  flex: 1;
  display: flex;
  align-items: center;
  justify-content: center;
  gap: 5px;
  color: #111;
}
.btns button + button {
  border-left: 1px solid #a8c4e6;
}
.btns .wide {
  flex: 0 0 34px;
}
.btns .on {
  background: linear-gradient(#fcc98a, #fbb25c 45%, #fda93c 46%, #fee08e);
}
.btns .serif {
  font-family: "Liberation Serif", serif;
  font-size: 14px;
}
.btns .money {
  gap: 9px;
  font-size: 13px;
}
.btns .percent {
  font-size: 13px;
}
.biu { width: 80px; }
.colors { width: 69px; }
.single { width: 34px; }
.single .wide { flex: 1; gap: 4px; }
.three { width: 69px; }
.two { width: 45px; }
.left-part {
  width: 122px;
  margin-right: 3px;
  border-right: 1px solid #aac4e2;
}
.right-part .small {
  width: 118px;
}
.right-part .merge {
  position: relative;
  gap: 2px;
  border: 1px solid #a78b57;
  padding-left: 1px;
  background: linear-gradient(#f7c88b, #f9ba62 45%, #fcae3f 46%, #fee394);
}
.merge .split {
  display: flex;
  align-items: center;
  height: 100%;
  margin-left: auto;
  padding: 0 2px;
  border-left: 1px solid #c79a4e;
}
.editing .stack {
  width: 84px;
}

/* Message bar */
.message-bar {
  flex: none;
  display: flex;
  align-items: flex-start;
  height: 43px;
  padding: 5px 4px 0 2px;
}
.message {
  flex: 1;
  display: flex;
  align-items: center;
  gap: 9px;
  height: 33px;
  padding-left: 3px;
  border: 1px solid #9fbad9;
  background: linear-gradient(#fff, #eaf5ff);
}
.message button {
  width: 88px;
  height: 23px;
  border: 1px solid #9fb9d8;
  background: #fff;
}
.dismiss {
  padding: 4px 1px 0 7px;
}

/* Formula bar */
.formula-bar {
  flex: none;
  display: flex;
  height: 25px;
  border-top: 1px solid #5f8cb8;
  border-bottom: 1px solid #5b86b0;
  background: linear-gradient(#fff 20px, #5f8cb8 20px, #5f8cb8 21px, #e6eff9 21px);
}
.formula-bar input {
  border: 0;
  background: none;
  font: inherit;
  font-size: 12px;
  color: #000;
}
.name-box {
  display: flex;
  align-items: center;
  width: 159px;
  height: 20px;
  border-left: 1px solid #5f8cb8;
}
.name-box input {
  flex: 1;
  width: 0;
  padding: 0 6px 0 0;
  text-align: center;
}
.name-box .caret {
  margin-right: 5px;
}
.fx {
  display: flex;
  align-items: center;
  justify-content: space-between;
  width: 85px;
  height: 20px;
  padding: 0 7px;
  border: 1px solid #7d9dc4;
  border-width: 0 1px;
  border-radius: 10px 0 0 10px;
  background: linear-gradient(#e8eef8, #a9c2e6);
}
.fx i {
  width: 7px;
  height: 7px;
  border-radius: 50%;
  background: #b9c0cb;
}
.fx em {
  font-family: "Liberation Serif", serif;
  font-size: 15px;
  font-weight: bold;
  color: #444d5c;
}
.fx small {
  font-size: 10px;
}
.formula-bar .formula {
  flex: 1;
  height: 20px;
  padding: 0 10px;
  font-size: 13px;
}
.formula-bar button {
  display: flex;
  align-items: center;
  justify-content: center;
  width: 16px;
  height: 20px;
  border: 1px solid #5f8cb8;
  border-width: 0 1px;
  background: linear-gradient(#e8effa, #b3cbed);
}

/* Worksheet */
.workspace {
  flex: 1;
  min-height: 0;
  display: flex;
}
.sheet {
  position: relative;
  flex: 1;
  overflow: hidden;
  background: #fff;
}
table {
  width: 100%;
  table-layout: fixed;
  border-collapse: separate;
  border-spacing: 0;
  font-family: "Liberation Serif", serif;
  font-size: 14px;
  line-height: 16px;
  color: #000;
}
.c-head { width: 26px; }
.c-a { width: 90px; }
.c-b { width: 94px; }
.c-c { width: 40px; }
.c-d { width: 84px; }
.c-e { width: 20px; }
.c-f { width: 94px; }
.c-h { width: 92px; }
.c-i { width: 21px; }
.c-j { width: 76px; }
.c-k { width: 61px; }
th {
  padding: 0;
  font-weight: normal;
  color: #27413e;
}
thead th {
  height: 19px;
  padding-top: 2px;
  border-right: 1px solid #9eb6ce;
  border-bottom: 1px solid #9eb6ce;
  background: linear-gradient(#f8fafc, #d3dbe9);
}
thead .sel {
  border-color: #f29536;
  background: linear-gradient(#f9d99f, #f1c15f);
}
thead .corner {
  border: 1px solid #9eb6ce;
  background: #a9c4e9;
}
.corner svg {
  margin: 1px 0 0 11px;
}
tbody th {
  vertical-align: bottom;
  line-height: 14px;
  border-right: 1px solid #9eb6ce;
  border-bottom: 1px solid #9eb6ce;
  background: #e4ecf7;
}
td {
  padding: 2px 2px 0;
  border-right: 1px solid #d0d7e5;
  border-bottom: 1px solid #d0d7e5;
  white-space: nowrap;
}
.h66 { height: 66px; }
.h63 { height: 63px; }
.h44 { height: 44px; }
.h37 { height: 37px; }
.h26 { height: 26px; }
.h23 { height: 23px; }
.first {
  border-left: 1px solid #0000d0;
  padding-left: 1px;
}
.last {
  border-right: 2px solid #0000d0;
}
.outside {
  border: 0;
  border-left: 1px solid #0000d0;
  background: #a0a0a0;
}
.title {
  font-size: 16px;
  font-weight: bold;
  text-align: center;
}
.bold {
  font-weight: bold;
}
.right {
  text-align: right;
}
.center {
  padding-left: 0;
  padding-right: 0;
  text-align: center;
}
.dot {
  border-bottom-color: transparent;
  background: repeating-linear-gradient(90deg, #000 0 3px, transparent 3px 5px) left bottom / 100% 1px no-repeat border-box;
}
.box {
  border-color: #000;
  box-shadow: -1px 0 #000, 0 -1px #000, -1px -1px #000;
}
.page-mark {
  position: absolute;
  left: 231px;
  top: 459px;
  font-family: "Liberation Sans", sans-serif;
  font-size: 58px;
  line-height: 58px;
  color: #969696;
  mix-blend-mode: multiply;
}
.page-mark.next {
  left: 699px;
  top: 486px;
  font-size: 11px;
  line-height: 13px;
}
.page-break {
  position: absolute;
  left: 655px;
  top: 19px;
  bottom: 0;
  width: 2px;
  background: repeating-linear-gradient(#0000d0 0 9px, #fff 9px 12px);
}
.arrow-shape {
  position: absolute;
  left: 664px;
  top: 41px;
  color: #fff;
}
.arrow-shape span {
  position: absolute;
  left: 37px;
  top: 30px;
}
.vscroll {
  flex: none;
  display: flex;
  flex-direction: column;
  align-items: center;
  width: 16px;
  padding-top: 2px;
  border-left: 1px solid #b5cdea;
  background: linear-gradient(90deg, #6f8fbd, #7d9dcc);
}
.splitter {
  width: 14px;
  height: 7px;
  border: 1px solid #7d95b8;
  background: #fff;
}
.tri {
  border: 4px solid transparent;
}
.tri.up {
  margin-top: 7px;
  border-top: 0;
  border-bottom-color: #3c4a73;
}
.tri.down {
  margin: auto 0 6px;
  border-bottom: 0;
  border-top-color: #3c4a73;
}
.vscroll .thumb {
  width: 15px;
  height: 8px;
  margin-top: 127px;
  border: 1px solid #5c6f92;
  border-radius: 2px;
  background: #dbe4f0;
}

/* Sheet tabs */
.sheet-tabs {
  flex: none;
  display: flex;
  height: 16px;
  border-top: 1px solid #7d99c4;
  border-bottom: 1px solid #6d8fc0;
  background: linear-gradient(#dceafb, #b5d0f5 55%, #c9dcf7);
}
.tab-nav {
  display: flex;
  align-items: center;
  justify-content: space-between;
  width: 63px;
  padding: 0 6px 0 5px;
  border-right: 1px solid #8aa6cf;
}
.tabs {
  flex: 1;
  display: flex;
  overflow: hidden;
  padding-left: 8px;
  font-family: "Noto Sans", sans-serif;
  font-size: 12px;
  line-height: 15px;
  white-space: nowrap;
}
.tabs a {
  flex: none;
  padding-left: 3px;
}
.tabs a::after {
  content: "";
  display: inline-block;
  width: 13px;
  height: 14px;
  margin-left: 4px;
  vertical-align: top;
  background: linear-gradient(135deg, transparent 46%, #7d99c4 47%, #7d99c4 51%, #fff 52%, #fff 57%, transparent 60%);
}
.tabs .active {
  padding-left: 8px;
  background: linear-gradient(100deg, #fff 88%, transparent 89%);
  font-weight: bold;
}
.hscroll {
  display: flex;
  align-items: center;
  justify-content: space-between;
  width: 93px;
  padding-right: 17px;
  background: #7494c4;
}
.grip {
  width: 6px;
  height: 13px;
  border: 1px solid #8a9cb8;
  background: #fff;
}
.tri.left {
  border-left: 0;
  border-right-color: #2c3c68;
}
.tri.rightward {
  border-right: 0;
  border-left-color: #2c3c68;
}
.hscroll .thumb {
  width: 23px;
  height: 13px;
  border: 1px solid #5c6f92;
  border-radius: 2px;
  background: repeating-linear-gradient(90deg, #7c8aa3 0 1px, transparent 1px 2px) center / 7px 6px no-repeat, linear-gradient(#f5f7fa, #c3ccda);
}

/* Status bar */
.status {
  flex: none;
  display: flex;
  align-items: stretch;
  justify-content: space-between;
  height: 22px;
  border-top: 1px solid #5f82b5;
  background: linear-gradient(#d9e7fa, #c5dafa 40%, #b0cdf3 45%, #d5e4f8);
  line-height: 20px;
}
.ready {
  width: 47px;
  padding-left: 7px;
  border-right: 1px solid #90b0dc;
}
.status-right {
  display: flex;
  align-items: center;
  width: 245px;
  padding: 0 5px;
  border-left: 1px solid #fff;
  background: linear-gradient(#a9c6ef, #84a7dc 50%, #7197d2 55%, #8fb2e4);
}
.views {
  display: flex;
  width: 56px;
  height: 18px;
  border: 1px solid #8aa8d6;
}
.views button {
  flex: 1;
  display: flex;
  align-items: center;
  justify-content: center;
  background: #cfdff5;
}
.views .on {
  background: #f8c25c;
}
.zoom-value {
  width: 44px;
  padding-left: 8px;
}
.status input {
  flex: 1;
  width: 0;
  margin: 0 1px;
  appearance: none;
  height: 16px;
  background: linear-gradient(#dbe7f8, #dbe7f8) center / 100% 1px no-repeat;
}
.status input::-webkit-slider-thumb {
  appearance: none;
  width: 9px;
  height: 13px;
  border: 1px solid #44546c;
  border-radius: 1px 1px 5px 5px;
  background: #dfe9f7;
}

/* Taskbar */
.taskbar {
  flex: none;
  display: flex;
  justify-content: space-between;
  height: 40px;
  background: linear-gradient(90deg, #3f6076, #54748a 18%, #4d7489 26%, #2e718f 32%, #2b6e92 75%, #2d5f86);
  color: #fff;
}
.apps {
  display: flex;
  gap: 4px;
  padding-left: 15px;
}
.app {
  display: flex;
  align-items: center;
  justify-content: center;
  width: 59px;
  height: 39px;
  border: 1px solid #8fa5b4;
  background: rgba(255, 255, 255, 0.18);
}
.app.plain {
  border: 0;
  background: none;
}
.app.stacked {
  width: 58px;
  padding-right: 4px;
  box-shadow: inset -4px 0 #7890a0;
}
.app.active {
  border-color: #dfe8ee;
  background: rgba(255, 255, 255, 0.45);
}
.tray {
  display: flex;
  align-items: center;
  gap: 8px;
  padding-right: 16px;
  font-size: 12px;
}
.lang {
  margin-left: 7px;
}
.clock {
  display: flex;
  flex-direction: column;
  width: 78px;
  text-align: center;
  line-height: 17px;
}
```
